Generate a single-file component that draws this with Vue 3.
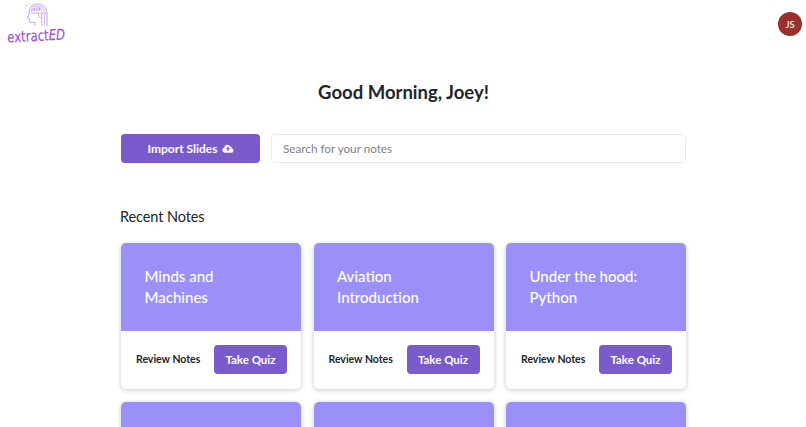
<template>
  <div class="page">
    <header class="topbar">
      <div class="logo">
        <svg class="logo-mark" viewBox="0 0 26 26" fill="none" aria-hidden="true">
          <path d="M12 24v-3.500H8c-1 0-1.500-.6-1.500-1.500v-2.200L4.300 15.800l1.700-3.300C5.500 6.500 9 2 14.500 2c5.500 0 9.500 3.800 9.500 9.500V24" stroke="#cfb0ea" stroke-width="1.200"/>
          <path d="M7.500 11h16M8.500 9.500C8.500 6 11 4 14.500 4c3.500 0 7 2.500 7.300 5.500M9 9l2.500-3 2.500 3 2.500-3.500L19 9M11.500 6v3M14 4.500V9M16.500 5.500V9" stroke="#c6a2e7" stroke-width=".9"/>
          <path d="M18.800 11v13M21.300 11v13M15.500 11v3.500l3.300 2" stroke="#cfb0ea" stroke-width="1"/>
          <circle cx="3.500" cy="3.500" r=".8" fill="#c6a2e7"/>
          <circle cx="6.500" cy="1.500" r=".6" fill="#c6a2e7"/>
          <circle cx="1.800" cy="6" r=".6" fill="#c6a2e7"/>
        </svg>
        <span class="logo-text">extract<em>ED</em></span>
      </div>
      <div class="avatar">JS</div>
    </header>

    <main class="content">
      <h1>Good Morning, Joey!</h1>

      <div class="actions">
        <button class="import-btn">
          Import Slides
          <svg class="cloud" viewBox="0 0 16 12" aria-hidden="true">
            <path fill-rule="evenodd" d="M4 11.500a3.500 3.500 0 0 1-.9-6.900A4.200 4.200 0 0 1 11 3.300a2.900 2.900 0 0 1 2.300 2.400A3 3 0 0 1 12.700 11.500ZM8 3.800 5.300 6.600h1.800v2.700h1.800V6.600h1.800Z" fill="#fff"/>
          </svg>
        </button>
        <input class="search" type="text" placeholder="Search for your notes" />
      </div>

      <h2>Recent Notes</h2>

      <div class="grid">
        <article v-for="(note, i) in notes" :key="i" class="card">
          <div class="card-top">
            <h3>{{ note }}</h3>
          </div>
          <!-- the lower row is cut off by the window before its text starts -->
          <div v-if="note" class="card-bottom">
            <a class="review">Review Notes</a>
            <button class="quiz-btn">Take Quiz</button>
          </div>
        </article>
      </div>
    </main>
  </div>
</template>

<script setup>
const notes = ['Minds and Machines', 'Aviation Introduction', 'Under the hood: Python', '', '', '']
</script>

<style>
html,
body {
  margin: 0;
  height: 427px;
  overflow: hidden;
  background: #fff;
}
</style>

<style scoped>
.page {
  font-family: Lato, "Noto Sans", sans-serif;
  color: #212529;
  height: 427px;
  overflow: hidden;
}

.topbar {
  display: flex;
  justify-content: space-between;
  align-items: flex-start;
  height: 62px;
  padding: 2px 4px 0 6px;
  box-sizing: border-box;
}

.logo {
  width: 60px;
  display: flex;
  flex-direction: column;
  align-items: center;
}

.logo-mark {
  width: 26px;
  height: 26px;
}

.logo-text {
  font-family: "DejaVu Sans", sans-serif;
  font-size: 15px;
  line-height: 16px;
  color: #a24fcf;
  white-space: nowrap;
  -webkit-text-stroke: 0.15px #a24fcf;
  transform: rotate(-3deg) scaleX(0.78);
}

.logo-text em {
  font-style: italic;
}

.avatar {
  width: 24px;
  height: 24px;
  margin-top: 10px;
  border-radius: 50%;
  background: #99302f;
  color: #fff;
  font-size: 9.500px;
  font-weight: 500;
  display: flex;
  align-items: center;
  justify-content: center;
}

.content {
  width: 565px;
  margin-left: 121px;
}

h1 {
  margin: 17px 0 0;
  font-size: 18.500px;
  line-height: 27px;
  font-weight: 700;
  text-align: center;
}

.actions {
  display: flex;
  gap: 11px;
  margin-top: 28px;
}

.import-btn {
  width: 139px;
  height: 29px;
  flex: none;
  border: 0;
  border-radius: 4px;
  background: #7a5bcb;
  color: #fff;
  font: 700 12px Lato, sans-serif;
  display: flex;
  align-items: center;
  justify-content: center;
  gap: 4px;
}

.cloud {
  width: 12px;
  height: 9px;
}

.search {
  flex: 1;
  min-width: 0;
  height: 29px;
  box-sizing: border-box;
  padding: 0 11px 1px;
  border: 1px solid #e9ecef;
  border-radius: 4px;
  outline: none;
  font: 400 11.700px Lato, sans-serif;
}

.search::placeholder {
  color: #7a838b;
  opacity: 1;
}

h2 {
  margin: 43px 0 15px -1px;
  font-size: 14.500px;
  line-height: 22px;
  font-weight: 400;
  letter-spacing: -0.1px;
}

.grid {
  display: grid;
  grid-template-columns: repeat(3, 180px);
  gap: 13px 12.500px;
}

.card {
  height: 146px;
  border-radius: 5px;
  background: #fff;
  box-shadow: 0 1px 5px rgba(0, 0, 0, 0.22);
  overflow: hidden;
  display: flex;
  flex-direction: column;
}

.card-top {
  height: 88px;
  flex: none;
  box-sizing: border-box;
  padding: 23px 40px 0 23.500px;
  background: #9a90f7;
}

h3 {
  margin: 0;
  color: #fff;
  font-size: 15px;
  line-height: 21px;
  font-weight: 500;
}

.card-bottom {
  flex: 1;
  display: flex;
  align-items: center;
  justify-content: space-between;
  padding: 0 14px 2px 15px;
}

.review {
  font-size: 10.500px;
  font-weight: 700;
  color: #212529;
}

.quiz-btn {
  width: 73px;
  height: 29px;
  border: 0;
  border-radius: 4px;
  background: #7a5bcb;
  color: #fff;
  font: 700 11.500px Lato, sans-serif;
}
</style>
